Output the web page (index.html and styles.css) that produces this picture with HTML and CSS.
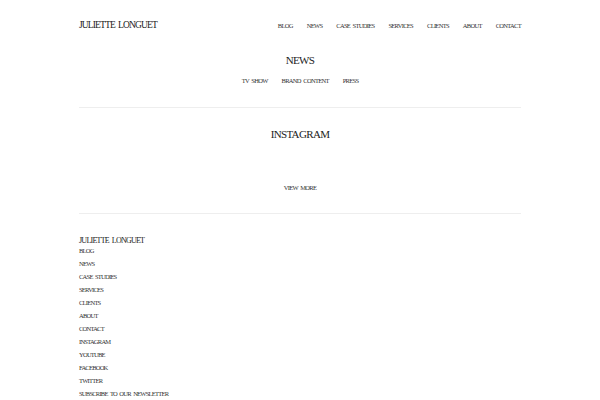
FILE: index.html
```html
<!DOCTYPE html>
<html lang="en">

<head>
    <meta charset="UTF-8">
    <meta name="viewport" content="width=device-width, initial-scale=1.0">
    <title>Juliette Longuet</title>
    <link rel="stylesheet" href="styles.css">
</head>

<body>
    <div class="wrap">
        <header class="topBar">
            <a href="#" class="logo">JULIETTE LONGUET</a>
            <nav class="mainNav">
                <a href="#">BLOG</a>
                <a href="#">NEWS</a>
                <a href="#">CASE STUDIES</a>
                <a href="#">SERVICES</a>
                <a href="#">CLIENTS</a>
                <a href="#">ABOUT</a>
                <a href="#">CONTACT</a>
            </nav>
        </header>

        <!-- News -->
        <section class="newsBlock">
            <h2 class="blockTitle">NEWS</h2>
            <div class="subNav">
                <a href="#">TV SHOW</a>
                <a href="#">BRAND CONTENT</a>
                <a href="#">PRESS</a>
            </div>
        </section>

        <!-- Instagram -->
        <section class="instaBlock">
            <h2 class="blockTitle">INSTAGRAM</h2>
            <a href="#" class="viewMore">VIEW MORE</a>
        </section>

        <footer class="footer">
            <div class="footLogo">JULIETTE LONGUET</div>
            <ul class="footLinks">
                <li><a href="#">BLOG</a></li>
                <li><a href="#">NEWS</a></li>
                <li><a href="#">CASE STUDIES</a></li>
                <li><a href="#">SERVICES</a></li>
                <li><a href="#">CLIENTS</a></li>
                <li><a href="#">ABOUT</a></li>
                <li><a href="#">CONTACT</a></li>
                <li><a href="#">INSTAGRAM</a></li>
                <li><a href="#">YOUTUBE</a></li>
                <li><a href="#">FACEBOOK</a></li>
                <li><a href="#">TWITTER</a></li>
                <li><a href="#">SUBSCRIBE TO OUR NEWSLETTER</a></li>
            </ul>
        </footer>
    </div>
</body>

</html>
```

FILE: styles.css
```css
body {
    margin: 0;
    background: #fff;
    color: #333;
    font-family: "Liberation Serif", serif;
}

a {
    color: #333;
    text-decoration: none;
}

.wrap {
    width: 442px;
    margin: 0 auto;
}

.topBar {
    display: flex;
    justify-content: space-between;
    align-items: center;
    height: 20px;
    padding-top: 15px;
}

.logo {
    font-size: 9.5px;
    letter-spacing: -0.85px;
    word-spacing: 1.5px;
    color: #222;
}

.mainNav {
    display: flex;
    gap: 14px;
}

.mainNav a {
    font-size: 6.5px;
    letter-spacing: -0.7px;
    word-spacing: 1.5px;
}

.blockTitle {
    margin: 0;
    font-size: 11px;
    font-weight: normal;
    letter-spacing: -0.65px;
    text-align: center;
    color: #222;
}

.newsBlock {
    padding-top: 19px;
    height: 53px;
    border-bottom: 1px solid #eee;
}

.subNav {
    display: flex;
    justify-content: center;
    gap: 14px;
    margin-top: 11px;
}

.subNav a {
    font-size: 6.5px;
    letter-spacing: -0.7px;
    word-spacing: 1.5px;
}

.instaBlock {
    padding-top: 20px;
    height: 85px;
    border-bottom: 1px solid #eee;
    text-align: center;
}

.viewMore {
    display: inline-block;
    margin-top: 44px;
    font-size: 6.5px;
    letter-spacing: -0.7px;
    word-spacing: 1.5px;
}

.footer {
    padding-top: 23px;
}

.footLogo {
    font-size: 8px;
    letter-spacing: -0.75px;
    word-spacing: 1.5px;
    line-height: 7px;
    color: #222;
}

.footLinks {
    list-style: none;
    margin: 0;
    padding: 0;
}

.footLinks li {
    font-size: 6.5px;
    letter-spacing: -0.75px;
    word-spacing: 1.5px;
    line-height: 13px;
}
```
